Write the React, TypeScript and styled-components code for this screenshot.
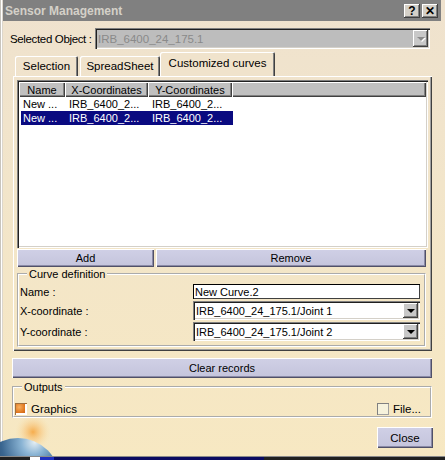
import React from 'react';
import styled, { createGlobalStyle } from 'styled-components';

const Global = createGlobalStyle`
  html, body { margin: 0; padding: 0; background: #f4e6c8; }
  body {
    font-family: "Liberation Sans", Arial, sans-serif;
    font-size: 11px;
    color: #000;
  }
  * { box-sizing: border-box; }
`;

const Dialog = styled.div`
  width: 445px;
  height: 460px;
  display: flex;
  flex-direction: column;
  overflow: hidden;
  background: linear-gradient(180deg, #efe2ce 0%, #f2e5ca 40%, #f7e8c2 100%);
  box-shadow: inset 1px 0 0 #c8c4bc, inset 2px 0 0 #ffffff, inset 3px 0 0 #dcd6cc;
`;

const TitleBar = styled.div`
  height: 21px;
  margin: 0 4px 0 3px;
  background: #808080;
  display: flex;
  align-items: center;
  padding: 0 3px 0 2px;
  flex-shrink: 0;
`;

const Title = styled.span`
  flex: 1;
  font-family: "Liberation Sans", Arial, sans-serif;
  font-weight: bold;
  font-size: 12px;
  color: #d4d0c8;
`;

const CaptionButton = styled.div`
  width: 16px;
  height: 14px;
  margin-left: 2px;
  background: #d4d0c8;
  box-shadow: inset -1px -1px 0 #404040, inset 1px 1px 0 #ffffff, inset -2px -2px 0 #808080;
  display: flex;
  align-items: center;
  justify-content: center;
  font-family: "Liberation Sans", Arial, sans-serif;
  font-weight: bold;
  font-size: 12px;
  line-height: 1;
  color: #000;
`;

const Body = styled.div`
  flex: 1;
  display: flex;
  flex-direction: column;
  padding: 7px 13px 0 12px;
`;

const SelectedRow = styled.div`
  display: flex;
  align-items: center;
  height: 21px;
  margin: 0 2px 0 -2px;
  font-size: 11.5px;
`;

const RowLabel = styled.span<{ $w?: number; $tight?: boolean }>`
  width: ${(p) => p.$w ?? 85}px;
  flex-shrink: 0;
  white-space: nowrap;
  letter-spacing: ${(p) => (p.$tight ? '-0.35px' : 'normal')};
`;

const Combo = styled.div<{ $disabled?: boolean; $h?: number }>`
  flex: 1;
  height: ${(p) => p.$h ?? 21}px;
  display: flex;
  align-items: center;
  padding: 2px 2px 2px 3px;
  background: ${(p) => (p.$disabled ? '#bdbdbd' : '#ffffff')};
  color: ${(p) => (p.$disabled ? '#8a8a8a' : '#000')};
  box-shadow: inset 1px 1px 0 #808080, inset 2px 2px 0 #202020, inset -1px -1px 0 #ffffff, inset -2px -2px 0 #d4d0c8;
`;

const ComboText = styled.span`
  flex: 1;
  white-space: nowrap;
  overflow: hidden;
`;

const DropButton = styled.div<{ $disabled?: boolean }>`
  width: 15px;
  align-self: stretch;
  background: #c8c8c8;
  box-shadow: inset -1px -1px 0 #404040, inset 1px 1px 0 #ffffff, inset -2px -2px 0 #808080;
  display: flex;
  align-items: center;
  justify-content: center;
  &::after {
    content: '';
    border-left: 4px solid transparent;
    border-right: 4px solid transparent;
    border-top: 4px solid ${(p) => (p.$disabled ? '#8a8a8a' : '#000')};
    filter: ${(p) => (p.$disabled ? 'drop-shadow(1px 1px 0 #fff)' : 'none')};
  }
`;

const TabStrip = styled.div`
  display: flex;
  align-items: flex-end;
  height: 24px;
  margin-top: 3px;
  padding-left: 2px;
  font-size: 11.5px;
`;

const Tab = styled.div<{ $active?: boolean; $w: number }>`
  width: ${(p) => p.$w}px;
  height: ${(p) => (p.$active ? 24 : 20)}px;
  margin: 0 ${(p) => (p.$active ? -2 : 1)}px 0 ${(p) => (p.$active ? -1 : 1)}px;
  display: flex;
  align-items: center;
  justify-content: center;
  padding-bottom: ${(p) => (p.$active ? 2 : 0)}px;
  border-radius: 2px 2px 0 0;
  box-shadow: inset 1px 1px 0 #ffffff, inset -1px 0 0 #404040, inset -2px 0 0 #808080;
  position: relative;
  z-index: ${(p) => (p.$active ? 1 : 0)};
  background: ${(p) => (p.$active ? '#f0e3cc' : 'transparent')};
  white-space: nowrap;
`;

const TabPanel = styled.div`
  display: flex;
  flex-direction: column;
  margin: 0 0 0 1px;
  padding: 3px 4px 4px 3px;
  border-top: 1px solid #ffffff;
  border-left: 1px solid #ffffff;
  box-shadow: inset -1px -1px 0 #404040, inset -2px -2px 0 #a0a0a0;
`;

const List = styled.div`
  height: 168px;
  background: #ffffff;
  padding: 2px;
  box-shadow: inset 1px 1px 0 #808080, inset 2px 2px 0 #202020, inset -1px -1px 0 #ffffff, inset -2px -2px 0 #d4d0c8;
  display: flex;
  flex-direction: column;
`;

const HeaderRow = styled.div`
  display: flex;
  height: 15px;
  background: #c0c0c0;
`;

const HeaderCell = styled.div<{ $w?: number }>`
  ${(p) => (p.$w ? `width: ${p.$w}px;` : 'flex: 1;')}
  flex-shrink: 0;
  height: 15px;
  display: flex;
  align-items: center;
  justify-content: center;
  box-shadow: inset 1px 1px 0 #ffffff, inset -1px -1px 0 #404040, inset -2px -2px 0 #808080;
  white-space: nowrap;
`;

const DataRow = styled.div<{ $selected?: boolean }>`
  display: flex;
  height: 14px;
  align-items: center;
  width: 212px;
  margin-left: 2px;
  background: ${(p) => (p.$selected ? '#0a0a80' : 'transparent')};
  color: ${(p) => (p.$selected ? '#ffffff' : '#000')};
`;

const DataCell = styled.div<{ $w: number }>`
  width: ${(p) => p.$w}px;
  padding-left: 2px;
  white-space: nowrap;
  overflow: hidden;
`;

const ButtonRow = styled.div`
  display: flex;
  gap: 2px;
  margin-top: 1px;
  margin-right: 2px;
`;

const LavButton = styled.div<{ $w?: number; $h?: number }>`
  ${(p) => (p.$w ? `width: ${p.$w}px;` : 'flex: 1;')}
  flex-shrink: 0;
  height: ${(p) => p.$h ?? 18}px;
  display: flex;
  align-items: center;
  justify-content: center;
  background: linear-gradient(180deg, #d0d0e6 0%, #c4c4dc 100%);
  box-shadow: inset 1px 1px 0 #ffffff, inset -1px -1px 0 #505068, inset -2px -2px 0 #8a8aa6;
  white-space: nowrap;
`;

const Group = styled.fieldset<{ $h: number }>`
  margin: 0;
  height: ${(p) => p.$h}px;
  padding: 0 4px 0 1px;
  border: 2px groove #ffffff;
  display: flex;
  flex-direction: column;
  min-width: 0;
`;

const Legend = styled.legend`
  padding: 0 2px;
  margin-left: 7px;
  line-height: 12px;
`;

const FieldRow = styled.div<{ $h: number; $mt: number }>`
  display: flex;
  align-items: center;
  height: ${(p) => p.$h}px;
  margin-top: ${(p) => p.$mt}px;
`;

const TextInput = styled.div`
  flex: 1;
  height: 15px;
  display: flex;
  align-items: center;
  padding-left: 2px;
  background: #ffffff;
  box-shadow: inset 1px 1px 0 #000, inset -1px -1px 0 #404040;
  white-space: nowrap;
`;

const CheckRow = styled.div`
  display: flex;
  align-items: center;
  height: 14px;
  margin-top: 9px;
  font-size: 11.5px;
`;

const CheckItem = styled.label`
  display: flex;
  align-items: center;
  gap: 4px;
  white-space: nowrap;
`;

const Check = styled.span<{ $on?: boolean }>`
  width: 12px;
  height: 12px;
  display: inline-block;
  background: ${(p) =>
    p.$on
      ? 'radial-gradient(circle at 35% 35%, #f8b060 0%, #e07820 50%, #b04a10 100%)'
      : '#f6f2dc'};
  box-shadow: ${(p) =>
    p.$on
      ? 'inset 1px 1px 0 #a07040, inset -2px -2px 0 #ffffff'
      : 'inset 1px 1px 0 #808080, inset -1px -1px 0 #a0a0a0'};
`;

const Footer = styled.div`
  flex: 1;
  display: flex;
  align-items: flex-start;
  margin-left: -12px;
`;

const Globe = styled.svg`
  align-self: flex-end;
  display: block;
`;

const CloseButton = styled(LavButton)`
  margin-left: auto;
  margin-top: 9px;
  margin-right: -1px;
  font-size: 11.5px;
`;

const Taskbar = styled.div`
  height: 4px;
  flex-shrink: 0;
  display: flex;
  background: #202020;
  border-top: 1px solid #8a8a8a;
`;

const TaskSeg = styled.div<{ $w: number; $c: string; $ml?: number }>`
  width: ${(p) => p.$w}px;
  margin-left: ${(p) => p.$ml ?? 0}px;
  background: ${(p) => p.$c};
`;

export default function App() {
  return (
    <>
      <Global />
      <Dialog>
        <TitleBar>
          <Title>Sensor Management</Title>
          <CaptionButton>?</CaptionButton>
          <CaptionButton>✕</CaptionButton>
        </TitleBar>
        <Body>
          <SelectedRow>
            <RowLabel $tight>Selected Object :</RowLabel>
            <Combo $disabled>
              <ComboText>IRB_6400_24_175.1</ComboText>
              <DropButton $disabled />
            </Combo>
          </SelectedRow>

          <TabStrip>
            <Tab $w={63}>Selection</Tab>
            <Tab $w={80}>SpreadSheet</Tab>
            <Tab $w={115} $active>Customized curves</Tab>
          </TabStrip>
          <TabPanel>
            <List>
              <HeaderRow>
                <HeaderCell $w={46}>Name</HeaderCell>
                <HeaderCell $w={83}>X-Coordinates</HeaderCell>
                <HeaderCell $w={84}>Y-Coordinates</HeaderCell>
                <HeaderCell />
              </HeaderRow>
              <DataRow>
                <DataCell $w={46}>New ...</DataCell>
                <DataCell $w={83}>IRB_6400_2...</DataCell>
                <DataCell $w={83}>IRB_6400_2...</DataCell>
              </DataRow>
              <DataRow $selected>
                <DataCell $w={46}>New ...</DataCell>
                <DataCell $w={83}>IRB_6400_2...</DataCell>
                <DataCell $w={83}>IRB_6400_2...</DataCell>
              </DataRow>
            </List>
            <ButtonRow>
              <LavButton $w={137}>Add</LavButton>
              <LavButton>Remove</LavButton>
            </ButtonRow>
            <Group $h={79} style={{ marginTop: 1, marginRight: 2 }}>
              <Legend>Curve definition</Legend>
              <FieldRow $h={15} $mt={4}>
                <RowLabel $w={173}>Name :</RowLabel>
                <TextInput>New Curve.2</TextInput>
              </FieldRow>
              <FieldRow $h={19} $mt={2}>
                <RowLabel $w={173}>X-coordinate :</RowLabel>
                <Combo $h={19}>
                  <ComboText>IRB_6400_24_175.1/Joint 1</ComboText>
                  <DropButton />
                </Combo>
              </FieldRow>
              <FieldRow $h={19} $mt={2}>
                <RowLabel $w={173}>Y-coordinate :</RowLabel>
                <Combo $h={19}>
                  <ComboText>IRB_6400_24_175.1/Joint 2</ComboText>
                  <DropButton />
                </Combo>
              </FieldRow>
            </Group>
          </TabPanel>

          <LavButton style={{ marginTop: 7 }}>Clear records</LavButton>

          <Group $h={37} style={{ marginTop: 3 }}>
            <Legend>Outputs</Legend>
            <CheckRow>
              <CheckItem>
                <Check $on />
                Graphics
              </CheckItem>
              <CheckItem style={{ marginLeft: 'auto', marginRight: 5 }}>
                <Check />
                File...
              </CheckItem>
            </CheckRow>
          </Group>

          <Footer>
            <Globe width="60" height="38" viewBox="0 0 60 38">
              <defs>
                <radialGradient id="glow" cx="0.5" cy="0.5" r="0.5">
                  <stop offset="0" stopColor="#f6a640" stopOpacity="0.9" />
                  <stop offset="0.5" stopColor="#f8c070" stopOpacity="0.45" />
                  <stop offset="1" stopColor="#f8e0a8" stopOpacity="0" />
                </radialGradient>
                <radialGradient id="earth" cx="0.62" cy="0.08" r="0.8" fx="0.7" fy="0.05">
                  <stop offset="0" stopColor="#e4eef4" />
                  <stop offset="0.18" stopColor="#8ab4d4" />
                  <stop offset="0.45" stopColor="#3a6690" />
                  <stop offset="1" stopColor="#0c1a38" />
                </radialGradient>
              </defs>
              <circle cx="33" cy="14" r="18" fill="url(#glow)" />
              <circle cx="18" cy="62" r="42" fill="url(#earth)" />
            </Globe>
            <CloseButton $w={56} $h={21}>Close</CloseButton>
          </Footer>
        </Body>
        <Taskbar>
          <TaskSeg $w={10} $c="#ffffff" $ml={30} />
          <TaskSeg $w={14} $c="#2030c0" />
          <TaskSeg $w={210} $c="#0a0a60" />
        </Taskbar>
      </Dialog>
    </>
  );
}
